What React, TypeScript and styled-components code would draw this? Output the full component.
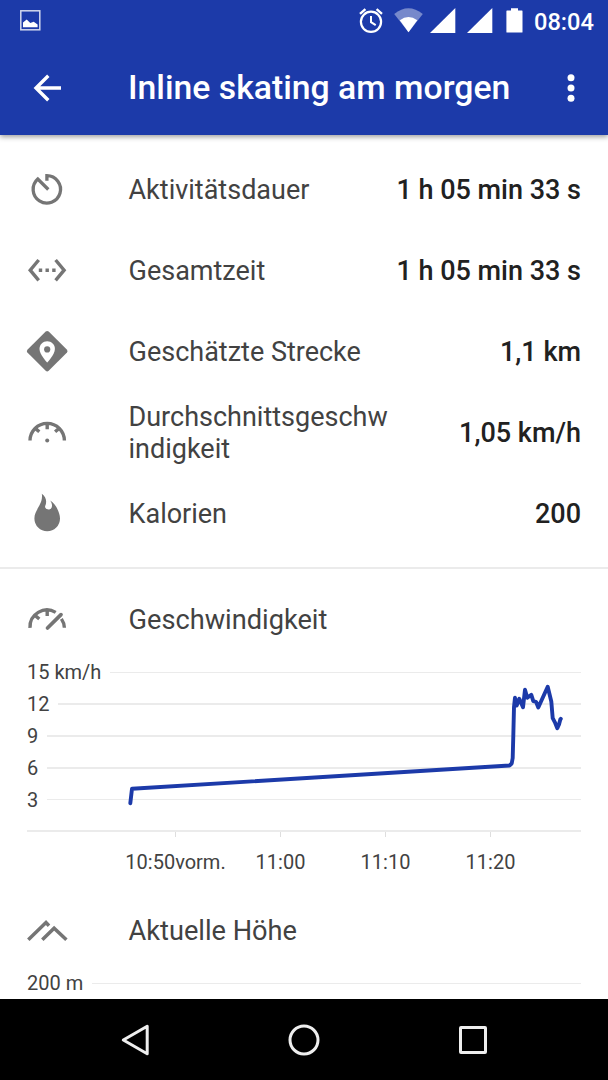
import React from 'react';
import styled, { createGlobalStyle } from 'styled-components';

const GlobalStyle = createGlobalStyle`
  * { box-sizing: border-box; }
  body { margin: 0; background: #fff; font-family: Roboto, "Liberation Sans", sans-serif; }
`;

const Screen = styled.div`
  width: 608px;
  height: 1080px;
  display: flex;
  flex-direction: column;
  overflow: hidden;
  background: #fff;
`;

const Header = styled.header`
  flex: none;
  height: 135px;
  background: #1c3aa9;
  color: #fff;
  box-shadow: 0 2px 5px rgba(0, 0, 0, 0.38);
  z-index: 1;
`;

const StatusBar = styled.div`
  height: 41px;
  display: flex;
  align-items: center;
  padding: 0 14px 0 20px;
`;

const StatusIcons = styled.div`
  margin-left: auto;
  display: flex;
  align-items: center;
`;

const Clock = styled.span`
  font-size: 23.6px;
  font-weight: 500;
  line-height: 28px;
  width: 60px;
  margin-left: 11px;
  padding-top: 2px;
  white-space: nowrap;
`;

const Toolbar = styled.div`
  height: 94px;
  display: flex;
  align-items: center;
  padding: 0 17px 0 26px;
`;

const Title = styled.h1`
  flex: 1;
  margin: 0 0 0 60px;
  font-size: 33.75px;
  line-height: 40px;
  font-weight: 500;
  white-space: nowrap;
`;

const Content = styled.main`
  flex: 1;
  min-height: 0;
  overflow: hidden;
  color: #424242;
`;

const Stats = styled.div`
  padding: 14px 0 13px;
  border-bottom: 2px solid #ebebeb;
`;

const StatRow = styled.div`
  height: 81px;
  display: flex;
  align-items: center;
  padding: 0 27px 0 26px;
`;

const Label = styled.span`
  width: 264px;
  margin-left: 60.5px;
  font-size: 27px;
  line-height: 32px;
  overflow-wrap: anywhere;
`;

const SectionTitle = styled(Label)`
  font-size: 27.2px;
`;

const Value = styled.span`
  margin-left: auto;
  font-size: 27px;
  line-height: 32px;
  font-weight: 500;
  color: #212121;
  white-space: nowrap;
`;

const Section = styled.section`
  height: 311px;
  &:first-of-type { margin-top: 15px; }
`;

const SectionHeader = styled.div`
  height: 72px;
  display: flex;
  align-items: center;
  padding-left: 26px;
`;

const Chart = styled.div`
  position: relative;
  margin: 0 27px;
`;

const GridRow = styled.div`
  height: 31.8px;
  display: flex;
  align-items: center;
  gap: 9px;
  padding-top: 1px;
  font-size: 20px;
  line-height: 24px;
  &::after {
    content: '';
    flex: 1;
    height: 1.5px;
    background: #ebebeb;
  }
`;

const Axis = styled.div`
  margin-top: 15px;
  height: 2px;
  background: #ebebeb;
`;

const Ticks = styled.div`
  display: grid;
  grid-template-columns: repeat(4, 105px);
  margin-left: 96px;
  justify-items: center;
`;

const Tick = styled.div`
  display: flex;
  flex-direction: column;
  align-items: center;
  font-size: 20px;
  line-height: 24px;
  white-space: nowrap;
  &::before {
    content: '';
    width: 1.5px;
    height: 5px;
    margin-bottom: 13px;
    background: #dedede;
  }
`;

const Trace = styled.svg`
  position: absolute;
  left: 0;
  top: 0;
  overflow: visible;
`;

const NavBar = styled.nav`
  flex: none;
  height: 81px;
  background: #000;
  display: flex;
  justify-content: space-between;
  align-items: center;
  padding: 0 115px;
`;

const Icon = styled.svg`
  flex: none;
  display: block;
  overflow: visible;
`;

const GREY = '#757575';

function RowIcon({ children }: { children: React.ReactNode }) {
  return (
    <Icon width="42" height="42" viewBox="-21 -20.2 42 42" fill="none" stroke={GREY} strokeWidth="3">
      {children}
    </Icon>
  );
}

const DurationIcon = () => (
  <RowIcon>
    <path d="M-.1-8.5V-13.5A13.7 13.7 0 1 1-9.2-10.1L1.3.3" strokeWidth="3.3" />
  </RowIcon>
);

const TotalIcon = () => (
  <RowIcon>
    <path d="M-8.3-10.2-16.8 0-8.3 10.2M8.6-10.2 17.1 0 8.6 10.2" strokeWidth="3.4" />
    <path d="M-8.2 0h3.4M-1.5 0h3.4M5.2 0h3.4" strokeWidth="3.6" />
  </RowIcon>
);

const DistanceIcon = () => (
  <RowIcon>
    <path d="M-1.3-19.6Q.2-21 1.7-19.6L20-1.4Q21.1 0 20 1.4L1.7 19.6Q.2 21-1.3 19.6L-19.6 1.4Q-20.8 0-19.6-1.4Z" fill={GREY} stroke="none" />
    <path d="M.2-10C-4-10-7.5-6.9-7.5-2.2-7.5 3.3.2 11.3.2 11.3S7.9 3.3 7.9-2.2C7.9-6.9 4.4-10 .2-10Z" fill="#fff" stroke="none" />
    <circle cx=".2" cy="-1.8" r="3.1" fill={GREY} stroke="none" />
  </RowIcon>
);

const AverageIcon = () => (
  <RowIcon>
    <path d="M-17 8.4A17.2 17.2 0 0 1 17.4 8.4M.2-8.5v5.5M-11.7-3.8l4 3.4M12.1-3.8 8.1-.4" strokeWidth="3.4" />
    <circle cx=".2" cy="8.4" r="2" fill={GREY} stroke="none" />
  </RowIcon>
);

const CaloriesIcon = () => (
  <RowIcon>
    <path d="M-5.2-19.5C-.4-16-.1-11-1.8-7.3-3.2-3.5 4.8-1.7 5-7.2 5.1-9.3 4.4-10.8 3.2-12.6 9-9.3 13 0 13 5.2A12.8 12.8 0 0 1-12.6 5.2C-12.6-3.7-3.5-8.7-5.2-19.5Z" fill={GREY} stroke="none" />
  </RowIcon>
);

const SpeedIcon = () => (
  <RowIcon>
    <path d="M-17 8.6A17 17 0 0 1 8.7-6.8M14.4-.3Q17.2 3.8 17.4 8.6M.2-8.5v5.4M-11.7-3.6l4 3.4" strokeWidth="3.4" />
    <path d="M.5 8.8 14-4.6" strokeWidth="3.7" strokeLinecap="round" />
  </RowIcon>
);

const AltitudeIcon = () => (
  <RowIcon>
    <path d="M-18.7 9.5-1-7.6 2-4.4M-4.7 9.5 7.1-2 19.4 9.5" strokeWidth="3.5" />
  </RowIcon>
);

const stats = [
  { label: 'Aktivitätsdauer', value: '1 h 05 min 33 s', icon: <DurationIcon /> },
  { label: 'Gesamtzeit', value: '1 h 05 min 33 s', icon: <TotalIcon /> },
  { label: 'Geschätzte Strecke', value: '1,1 km', icon: <DistanceIcon /> },
  { label: 'Durchschnittsgeschwindigkeit', value: '1,05 km/h', icon: <AverageIcon /> },
  { label: 'Kalorien', value: '200', icon: <CaloriesIcon /> },
];

const speedLine =
  '103.3,147.2 105,132.7 482.5,109.5 484.7,107.5 485.7,102 486.3,80 487,51 488,41.8 489.7,49.5 492.3,42.8 496,51.2 498,33.8 500.3,41.8 504.3,38.8 506.3,45.2 509,45.8 511.3,51.5 520.7,30.8 524.3,45.5 525.7,62.2 528.3,67.2 530.3,72.2 532,68.5 533.3,63.5 533.8,62.8';

export default function App() {
  return (
    <Screen>
      <GlobalStyle />
      <Header>
        <StatusBar>
          <Icon width="21" height="21" viewBox="0 0 21 21">
            <rect x=".8" y=".8" width="19" height="19" fill="none" stroke="#d2d8ee" strokeWidth="1.5" />
            <path d="M3 17.3V12.5L6.7 9.5 10.3 13 13.7 11.8 17.6 14.5V17.3Z" fill="#fff" />
          </Icon>
          <StatusIcons>
            <Icon width="24" height="25" viewBox="0 0 24 25" fill="none" stroke="#fff">
              <circle cx="12" cy="13.8" r="10.1" strokeWidth="2.2" />
              <path d="M12 8v6.2l4.7 3" strokeWidth="2" />
              <path d="M1 5.8 6.4 1.2M17.6 1.2 23 5.8" strokeWidth="2.4" />
            </Icon>
            <Icon width="29" height="25" viewBox="0 0 29 25" style={{ marginLeft: 11 }}>
              <path d="M.2 6Q14.4-5.4 28.8 6L14.5 24.2Z" fill="#7789cb" />
              <path d="M5.8 12.2Q14.5 6 23.3 12.2L14.5 24.2Z" fill="#fff" />
            </Icon>
            <Icon width="26" height="25" viewBox="0 0 26 25" style={{ marginLeft: 7 }}>
              <path d="M0 25H25.3V0Z" fill="#fff" />
            </Icon>
            <Icon width="26" height="25" viewBox="0 0 26 25" style={{ marginLeft: 11 }}>
              <path d="M0 25H25.3V0Z" fill="#fff" />
            </Icon>
            <Icon width="17" height="25" viewBox="0 0 17 25" style={{ marginLeft: 13 }}>
              <path d="M1 2.6H5V.2H12V2.6H16Q16.5 2.6 16.5 3.2V24Q16.5 24.5 16 24.5H1Q.4 24.5.4 24V3.2Q.4 2.6 1 2.6Z" fill="#fff" />
            </Icon>
            <Clock>08:04</Clock>
          </StatusIcons>
        </StatusBar>
        <Toolbar>
          <Icon width="42" height="42" viewBox="-21 -21 42 42" fill="none" stroke="#fff" strokeWidth="3.4">
            <path d="M14 0H-10.5M1.3-12.3-11 0 1.3 12.3" />
          </Icon>
          <Title>Inline skating am morgen</Title>
          <Icon width="40" height="42" viewBox="-20 -21 40 42" fill="#fff">
            <circle cx="0" cy="-10.2" r="3.5" />
            <circle cx="0" cy="0" r="3.5" />
            <circle cx="0" cy="10.2" r="3.5" />
          </Icon>
        </Toolbar>
      </Header>
      <Content>
        <Stats>
          {stats.map((s) => (
            <StatRow key={s.label}>
              {s.icon}
              <Label>{s.label}</Label>
              <Value>{s.value}</Value>
            </StatRow>
          ))}
        </Stats>
        <Section>
          <SectionHeader>
            <SpeedIcon />
            <SectionTitle>Geschwindigkeit</SectionTitle>
          </SectionHeader>
          <Chart>
            {['15 km/h', '12', '9', '6', '3'].map((t) => (
              <GridRow key={t}>{t}</GridRow>
            ))}
            <Axis />
            <Ticks>
              {['10:50vorm.', '11:00', '11:10', '11:20'].map((t) => (
                <Tick key={t}>{t}</Tick>
              ))}
            </Ticks>
            <Trace width="554" height="176" viewBox="0 0 554 176">
              <polyline points={speedLine} fill="none" stroke="#1c3aa9" strokeWidth="3.9" strokeLinejoin="round" strokeLinecap="round" />
            </Trace>
          </Chart>
        </Section>
        <Section>
          <SectionHeader>
            <AltitudeIcon />
            <SectionTitle>Aktuelle Höhe</SectionTitle>
          </SectionHeader>
          <Chart>
            <GridRow>200 m</GridRow>
          </Chart>
        </Section>
      </Content>
      <NavBar>
        <Icon width="40" height="40" viewBox="0 0 40 40" fill="none" stroke="#eee" strokeWidth="3" strokeLinejoin="round">
          <path d="M32.2 6.3V33.7L8.3 20Z" />
        </Icon>
        <Icon width="40" height="40" viewBox="0 0 40 40" fill="none" stroke="#eee" strokeWidth="3">
          <circle cx="20" cy="20" r="14" />
        </Icon>
        <Icon width="40" height="40" viewBox="0 0 40 40" fill="none" stroke="#eee" strokeWidth="3">
          <rect x="7.5" y="7.5" width="25" height="25" rx=".5" />
        </Icon>
      </NavBar>
    </Screen>
  );
}
